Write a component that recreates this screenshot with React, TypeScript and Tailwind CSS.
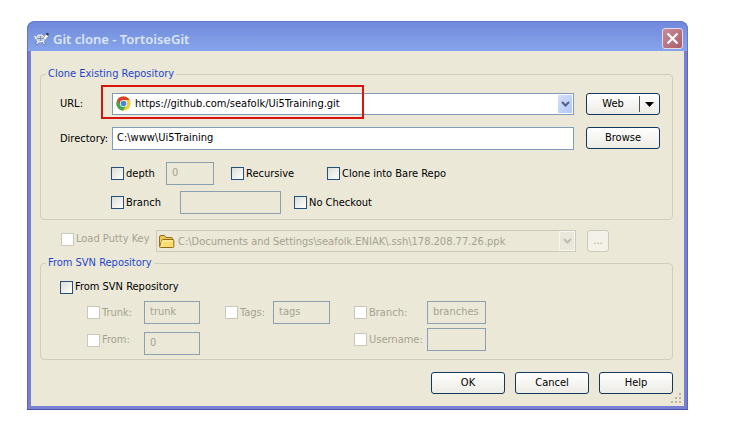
import type { ReactNode } from "react";

function Turtle() {
  return (
    <svg width="16" height="16" viewBox="0 0 16 16" aria-hidden="true">
      <path d="M4 10l-1.500 3 2 .5L6.500 10.500ZM9 10l1.500 3.500 2-.5-1.500-3.500Z" fill="#eef2f8" stroke="#4b5b76" strokeWidth=".6" />
      <path d="M3 7 5 4.200 9 4l3 3-1.500 3.500-5.500.5Z" fill="#c3cddd" stroke="#f4f7fc" strokeWidth="1" />
      <path d="M5 7.500h5M7.500 5v5" stroke="#7f93b5" strokeWidth="1" />
      <path d="M.5 4.500 3 5l1.500 3-2 .5Z" fill="#fff" stroke="#7486a5" strokeWidth=".5" />
      <path d="M10.500 7.500 12 4l2.500-1.500.5 3L12.500 9Z" fill="#fff" stroke="#5a6a86" strokeWidth=".5" />
      <path d="M13.300 2h2.200v2.200h-2.200Z" fill="#2c3444" />
    </svg>
  );
}

function Chrome() {
  return (
    <svg width="15" height="15" viewBox="0 0 48 48" aria-hidden="true">
      <circle cx="24" cy="24" r="23" fill="#f6cf35" />
      <path d="M24 24 4.100 12.500A23 23 0 0 0 22 47l11.500-17.500Z" fill="#45a552" />
      <path d="M24 13H43.900A23 23 0 0 0 4.100 12.500L14.500 29.500 24 24Z" fill="#d8402f" />
      <circle cx="24" cy="24" r="11.500" fill="#fff" />
      <circle cx="24" cy="24" r="9" fill="#4a86d8" />
    </svg>
  );
}

function Folder() {
  return (
    <svg width="17" height="15" viewBox="0 0 17 15" aria-hidden="true">
      <path d="M1.500 12V3q0-1.500 1.500-1.500h3.500L8 3.500h5.500q1 0 1 1V6" fill="#eec74e" stroke="#8e6d1c" />
      <path d="M1.500 12.500 4 6.500q.3-1 1-1h10q1 0 .8 1v6q0 1-1 1H2.500q-1 0-1-1Z" fill="#f9dc6c" stroke="#8e6d1c" />
      <path d="M4 12V7h10.500" fill="none" stroke="#fff4b8" />
    </svg>
  );
}

function Chevron({ muted = false }: { muted?: boolean }) {
  return (
    <span
      className={
        muted
          ? "pointer-events-none absolute inset-y-px right-px flex w-4 items-center justify-center border border-[#f7f6f0] bg-[#e9e7dc] text-[#bdbbae]"
          : "pointer-events-none absolute inset-y-0.5 right-0.5 flex w-[14px] items-center justify-center bg-linear-to-br from-[#d3e0fb] to-[#b3c8f6] text-[#4d6185]"
      }
    >
      <svg width="9" height="6" viewBox="0 0 9 6" aria-hidden="true">
        <path d="M1 1l3.500 3.500L8 1" fill="none" stroke="currentColor" strokeWidth="2" />
      </svg>
    </span>
  );
}

function Check({ label, width = "", disabled = false }: { label: string; width?: string; disabled?: boolean }) {
  return (
    <label className={`flex shrink-0 items-center gap-0.5 whitespace-nowrap ${width} ${disabled ? "text-[#a5a28f]" : ""}`}>
      <input
        type="checkbox"
        disabled={disabled}
        className="size-[13px] shrink-0 appearance-none border border-[#23507f] bg-linear-to-br from-[#dcdcd7] to-white disabled:border-[#cac8bb] disabled:from-white"
      />
      {label}
    </label>
  );
}

function Field({ name, value = "", width }: { name: string; value?: string; width: string }) {
  return (
    <input
      aria-label={name}
      defaultValue={value}
      disabled
      className={`h-[23px] shrink-0 border border-[#8a9fb0] bg-transparent px-[5px] pb-0.5 text-[#a5a28f] ${width}`}
    />
  );
}

function Group({ title, className, children }: { title: string; className: string; children: ReactNode }) {
  return (
    <fieldset className={`rounded-sm border border-[#d0ceba] ${className}`}>
      <legend className="ml-[5px] px-0.5 leading-4 text-[#1f46c8]">{title}</legend>
      {children}
    </fieldset>
  );
}

const button =
  "flex h-[22px] w-[74px] shrink-0 items-center justify-center rounded-[3px] border border-[#12385f] bg-linear-to-b from-white to-[#ecebe4]";

export default function App() {
  return (
    <main className="min-h-screen bg-white pt-[21px] pr-16 pl-[27px] font-['DejaVu_Sans_Condensed','DejaVu_Sans',sans-serif] text-[11px] leading-4 text-black">
      <section className="rounded-t-lg border-b border-[#4d55ab] bg-[#7980d2]">
        <header className="flex h-[30px] items-center gap-1 rounded-t-lg border-x border-t border-[#6478cc] bg-linear-to-b from-[#7088dc] via-[#7c98e2] to-[#86a4ec] pt-1 pr-1 pl-[5px]">
          <Turtle />
          <h1 className="flex-1 font-['Noto_Sans',sans-serif] text-[13px] font-semibold text-[#dce6fb]">Git clone - TortoiseGit</h1>
          <button
            aria-label="Close"
            className="flex size-[21px] items-center justify-center rounded-[3px] border border-[#e3d9ec] bg-linear-to-br from-[#c98c96] to-[#a95f6c]"
          >
            <svg width="13" height="13" viewBox="0 0 13 13" aria-hidden="true">
              <path d="M1.500 1.500l10 10M11.500 1.500l-10 10" stroke="#fff" strokeWidth="2.200" />
            </svg>
          </button>
        </header>
        <div className="border-x border-[#5c64bd] px-[3px] pb-[3px]">
          <div className="relative bg-[#ebe8d8] pt-[15px] pr-[11px] pb-3 pl-[9px]">
            <Group title="Clone Existing Repository" className="pb-[5px]">
              <div className="flex pt-[11px] pr-3 pl-[19px]">
                <label htmlFor="url" className="w-[52px] shrink-0 pt-[3px]">
                  URL:
                </label>
                <div className="relative mr-3 flex-1">
                  <select
                    id="url"
                    className="h-[22px] w-full appearance-none border border-[#7f9db9] bg-white pl-[22px]"
                  >
                    <option>https://github.com/seafolk/Ui5Training.git</option>
                  </select>
                  <span className="pointer-events-none absolute top-[3px] left-1">
                    <Chrome />
                  </span>
                  <Chevron />
                  <span className="pointer-events-none absolute -top-2 -left-[11px] h-[34px] w-[263px] border-2 border-[#d9140f]" />
                </div>
                <button className={button}>
                  <span className="flex-1">Web</span>
                  <span className="flex h-4 w-5 items-center justify-center border-l border-[#55534c]">
                    <svg width="9" height="5" viewBox="0 0 9 5" aria-hidden="true">
                      <path d="M0 0h9L4.500 5Z" />
                    </svg>
                  </span>
                </button>
              </div>
              <div className="flex pt-3 pr-3 pl-[19px]">
                <label htmlFor="directory" className="w-[52px] shrink-0 pt-1">
                  Directory:
                </label>
                <input
                  id="directory"
                  defaultValue="C:\www\Ui5Training"
                  className="mr-3 h-[23px] min-w-0 flex-1 border border-[#7f9db9] bg-white px-1 pb-0.5"
                />
                <button className={button}>Browse</button>
              </div>
              <div className="flex items-center pt-3 pl-[70px]">
                <Check label="depth" width="w-[55px]" />
                <Field name="Depth value" value="0" width="mr-[17px] w-12" />
                <Check label="Recursive" width="w-24" />
                <Check label="Clone into Bare Repo" />
              </div>
              <div className="flex items-center pt-1.5 pl-[70px]">
                <Check label="Branch" width="w-[69px]" />
                <Field name="Branch name" width="mr-[13px] w-[101px]" />
                <Check label="No Checkout" />
              </div>
            </Group>
            <div className="flex pt-2.5 pr-16 pl-[21px]">
              <Check label="Load Putty Key" width="h-[18px] w-[95px]" disabled />
              <div className="relative mr-[11px] flex-1">
                <select
                  aria-label="Putty key file"
                  disabled
                  className="h-[22px] w-full appearance-none border border-[#cbc9b9] bg-transparent pt-0.5 pl-[21px] text-[#a5a28f] opacity-100"
                >
                  <option>C:\Documents and Settings\seafolk.ENIAK\.ssh\178.208.77.26.ppk</option>
                </select>
                <span className="pointer-events-none absolute top-1 left-0.5">
                  <Folder />
                </span>
                <Chevron muted />
              </div>
              <button
                disabled
                aria-label="Browse for key"
                className="size-[22px] rounded-[3px] border border-[#cbc9b9] bg-[#f3f1e8] text-[#a5a28f]"
              >
                ...
              </button>
            </div>
            <Group title="From SVN Repository" className="mt-[3px] pb-1">
              <div className="pt-2 pl-[19px]">
                <Check label="From SVN Repository" />
              </div>
              <div className="flex items-start pt-1.5 pl-[46px]">
                <div className="flex flex-col gap-2">
                  <div className="flex items-center">
                    <Check label="Trunk:" width="w-[57px]" disabled />
                    <Field name="Trunk path" value="trunk" width="w-14" />
                  </div>
                  <div className="flex items-start">
                    <Check label="From:" width="w-[57px]" disabled />
                    <Field name="From revision" value="0" width="w-14" />
                  </div>
                </div>
                <div className="ml-[25px] flex items-center">
                  <Check label="Tags:" width="w-12" disabled />
                  <Field name="Tags path" value="tags" width="w-[57px]" />
                </div>
                <div className="ml-6 flex flex-col gap-1">
                  <div className="flex items-center">
                    <Check label="Branch:" width="w-[73px]" disabled />
                    <Field name="Branches path" value="branches" width="w-[59px]" />
                  </div>
                  <div className="flex items-center">
                    <Check label="Username:" width="w-[73px]" disabled />
                    <Field name="Username value" width="w-[59px]" />
                  </div>
                </div>
              </div>
            </Group>
            <div className="flex justify-end gap-2.5 pt-3">
              <button className={button}>OK</button>
              <button className={button}>Cancel</button>
              <button className={button}>Help</button>
            </div>
            <svg className="absolute right-0.5 bottom-0.5" width="11" height="11" viewBox="0 0 11 11" aria-hidden="true">
              <path d="M8 0h2v2H8ZM4 4h2v2H4ZM8 4h2v2H8ZM0 8h2v2H0ZM4 8h2v2H4ZM8 8h2v2H8Z" fill="#b8b5a2" />
            </svg>
          </div>
        </div>
      </section>
    </main>
  );
}
